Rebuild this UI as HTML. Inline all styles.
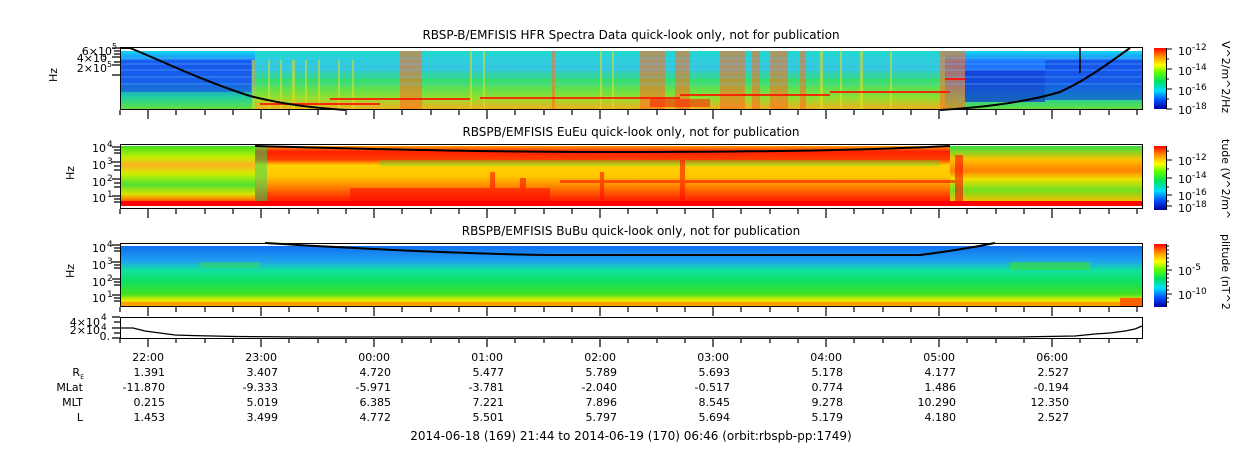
<!DOCTYPE html>
<html><head><meta charset="utf-8"><style>
body{margin:0;background:#fff;width:1250px;height:449px;overflow:hidden;font-family:"DejaVu Sans","Liberation Sans",sans-serif;}
svg text{font-family:"DejaVu Sans","Liberation Sans",sans-serif;fill:#000;}
</style></head><body>
<svg width="1250" height="449" viewBox="0 0 1250 449" xmlns="http://www.w3.org/2000/svg">
<defs>
<linearGradient id="cb" x1="0" y1="1" x2="0" y2="0">
<stop offset="0" stop-color="#0000a0"/><stop offset="0.15" stop-color="#0050ff"/><stop offset="0.3" stop-color="#00e0ff"/><stop offset="0.45" stop-color="#00e060"/><stop offset="0.6" stop-color="#60ff00"/><stop offset="0.72" stop-color="#ffff00"/><stop offset="0.86" stop-color="#ff9000"/><stop offset="1" stop-color="#ff0000"/></linearGradient>
<linearGradient id="p1v" x1="0" y1="0" x2="0" y2="1">
<stop offset="0" stop-color="#10d8f0"/><stop offset="0.2" stop-color="#2070ff"/><stop offset="0.55" stop-color="#2080f0"/><stop offset="0.8" stop-color="#20d0a0"/><stop offset="1" stop-color="#60e040"/></linearGradient>
<linearGradient id="p1m" x1="0" y1="0" x2="0" y2="1">
<stop offset="0" stop-color="#20d8d0"/><stop offset="0.3" stop-color="#30c8e0"/><stop offset="0.5" stop-color="#30e070"/><stop offset="0.8" stop-color="#90e030"/><stop offset="1" stop-color="#f0b020"/></linearGradient>
<linearGradient id="p2v" x1="0" y1="0" x2="0" y2="1">
<stop offset="0" stop-color="#ffa000"/><stop offset="0.1" stop-color="#ff2000"/><stop offset="0.25" stop-color="#ff4000"/><stop offset="0.35" stop-color="#ffd000"/><stop offset="0.55" stop-color="#ffc800"/><stop offset="0.75" stop-color="#ff8000"/><stop offset="0.9" stop-color="#ff4000"/><stop offset="1" stop-color="#ff2000"/></linearGradient>
<linearGradient id="p2l" x1="0" y1="0" x2="0" y2="1">
<stop offset="0" stop-color="#40e020"/><stop offset="0.2" stop-color="#c0f000"/><stop offset="0.35" stop-color="#ffb020"/><stop offset="0.5" stop-color="#d0f000"/><stop offset="0.7" stop-color="#50e030"/><stop offset="0.88" stop-color="#e0e000"/><stop offset="1" stop-color="#ff6000"/></linearGradient>
<linearGradient id="p2r" x1="0" y1="0" x2="0" y2="1">
<stop offset="0" stop-color="#30e040"/><stop offset="0.25" stop-color="#ffc000"/><stop offset="0.45" stop-color="#ff8000"/><stop offset="0.6" stop-color="#f0e000"/><stop offset="0.8" stop-color="#70e020"/><stop offset="1" stop-color="#f0c000"/></linearGradient>
<linearGradient id="p3v" x1="0" y1="0" x2="0" y2="1">
<stop offset="0" stop-color="#1070f0"/><stop offset="0.25" stop-color="#20a0f0"/><stop offset="0.4" stop-color="#10e0a0"/><stop offset="0.6" stop-color="#10e060"/><stop offset="0.8" stop-color="#40e020"/><stop offset="0.9" stop-color="#e0f000"/><stop offset="1" stop-color="#ffb000"/></linearGradient>
</defs>

<text x="631" y="39" font-size="12" text-anchor="middle">RBSP-B/EMFISIS  HFR Spectra Data quick-look only, not for publication</text>
<text x="631" y="136" font-size="12" text-anchor="middle">RBSPB/EMFISIS  EuEu quick-look only, not for publication</text>
<text x="631" y="235" font-size="12" text-anchor="middle">RBSPB/EMFISIS  BuBu quick-look only, not for publication</text>

<!-- PANEL 1 -->
<rect x="121" y="51" width="1021" height="58" fill="url(#p1v)"/>
<rect x="255" y="51" width="690" height="58" fill="url(#p1m)"/>
<g fill="#ff7020" opacity="0.6">
<rect x="400" y="51" width="22" height="58"/><rect x="552" y="51" width="3" height="58"/><rect x="640" y="51" width="25" height="58"/><rect x="675" y="51" width="15" height="58"/><rect x="720" y="51" width="25" height="58"/><rect x="752" y="51" width="8" height="58"/><rect x="770" y="51" width="18" height="58"/><rect x="800" y="51" width="6" height="58"/><rect x="940" y="51" width="25" height="58"/></g>
<g fill="#e0e020" opacity="0.6">
<rect x="252" y="60" width="3" height="49"/><rect x="268" y="60" width="2" height="49"/><rect x="280" y="60" width="2" height="49"/><rect x="292" y="60" width="3" height="49"/><rect x="305" y="60" width="2" height="49"/><rect x="318" y="60" width="2" height="49"/><rect x="338" y="60" width="2" height="49"/><rect x="352" y="60" width="2" height="49"/><rect x="470" y="51" width="2" height="58"/><rect x="483" y="51" width="2" height="58"/><rect x="600" y="51" width="2" height="58"/><rect x="612" y="51" width="2" height="58"/><rect x="820" y="51" width="3" height="58"/><rect x="840" y="51" width="2" height="58"/><rect x="860" y="51" width="3" height="58"/><rect x="890" y="51" width="2" height="58"/></g>
<g fill="#ff1000" opacity="0.85">
<rect x="330" y="98" width="140" height="2"/><rect x="480" y="97" width="200" height="2"/><rect x="680" y="94" width="150" height="2"/><rect x="830" y="91" width="120" height="2"/><rect x="945" y="78" width="20" height="2"/><rect x="260" y="103" width="120" height="2"/><rect x="650" y="99" width="60" height="8" opacity="0.6"/></g>
<rect x="965" y="70" width="80" height="32" fill="#1030d0" opacity="0.7"/>
<rect x="1045" y="60" width="97" height="40" fill="#1040e0" opacity="0.6"/>
<rect x="121" y="60" width="130" height="32" fill="#1040e0" opacity="0.5"/>
<g stroke="#60c0ff" stroke-width="1" opacity="0.5">
<line x1="121" y1="58" x2="1142" y2="58"/><line x1="121" y1="64" x2="1142" y2="64"/><line x1="121" y1="70" x2="1142" y2="70"/><line x1="121" y1="77" x2="1142" y2="77"/><line x1="121" y1="84" x2="1142" y2="84"/></g>
<path d="M120,48 L130,48 C160,60 200,80 250,96 C290,106 320,108 345,110 M940,110 C990,107 1030,101 1060,92 C1090,78 1110,62 1130,48" fill="none" stroke="#000" stroke-width="2"/>
<line x1="1080" y1="47" x2="1080" y2="73" stroke="#000" stroke-width="1.5"/>
<rect x="120.5" y="47.5" width="1022" height="62" fill="none" stroke="#000"/>

<!-- PANEL 2 -->
<rect x="121" y="146" width="1021" height="55" fill="url(#p2v)"/>
<rect x="121" y="146" width="134" height="55" fill="url(#p2l)"/>
<rect x="255" y="146" width="12" height="55" fill="#20e060" opacity="0.5"/>
<rect x="950" y="146" width="192" height="55" fill="url(#p2r)"/>
<rect x="380" y="160" width="560" height="6" fill="#40e030" opacity="0.35"/>
<g fill="#ff1000" opacity="0.6"><rect x="350" y="188" width="200" height="13"/><rect x="490" y="172" width="5" height="29"/><rect x="520" y="178" width="6" height="23"/><rect x="600" y="172" width="4" height="29"/><rect x="680" y="160" width="5" height="41"/><rect x="955" y="155" width="8" height="46"/><rect x="560" y="180" width="400" height="3"/></g>
<rect x="121" y="201" width="1021" height="5" fill="#ff0000"/>
<path d="M255,146 C400,150 500,152 620,152 C760,152 870,150 950,146" fill="none" stroke="#000" stroke-width="2"/>
<rect x="120.5" y="144.5" width="1022" height="64" fill="none" stroke="#000"/>

<!-- PANEL 3 -->
<rect x="121" y="246" width="1021" height="60" fill="url(#p3v)"/>
<rect x="121" y="302" width="1021" height="4" fill="#ffa000"/>
<rect x="1120" y="298" width="22" height="8" fill="#ff6000"/>
<rect x="1010" y="262" width="80" height="8" fill="#40e030" opacity="0.6"/>
<rect x="200" y="262" width="60" height="6" fill="#40e030" opacity="0.4"/>
<path d="M265,243 C380,250 470,254 550,255 L920,255 C960,250 980,246 995,243" fill="none" stroke="#000" stroke-width="2"/>
<rect x="120.5" y="243.5" width="1022" height="63" fill="none" stroke="#000"/>

<!-- PANEL 4 -->
<path d="M121,328 L133,328 L145,331 L160,333 L175,335 L190,335.5 L235,336.5 L300,337 L1015,337 L1075,336 L1095,334 L1110,333 L1125,331 L1135,329 L1142,326" fill="none" stroke="#000" stroke-width="1.3"/>
<rect x="120.5" y="317.5" width="1022" height="21" fill="none" stroke="#000"/>

<g stroke="#000" stroke-width="1.2">
<path d="M120,110v5 M148,110v9 M176,110v5 M205,110v5 M233,110v5 M261,110v9 M289,110v5 M318,110v5 M346,110v5 M374,110v9 M402,110v5 M431,110v5 M459,110v5 M487,110v9 M515,110v5 M544,110v5 M572,110v5 M600,110v9 M628,110v5 M657,110v5 M685,110v5 M713,110v9 M741,110v5 M770,110v5 M798,110v5 M826,110v9 M854,110v5 M883,110v5 M911,110v5 M939,110v9 M967,110v5 M996,110v5 M1024,110v5 M1052,110v9 M1080,110v5 M1109,110v5 M1137,110v5"/>
<path transform="translate(0,99)" d="M120,110v5 M148,110v9 M176,110v5 M205,110v5 M233,110v5 M261,110v9 M289,110v5 M318,110v5 M346,110v5 M374,110v9 M402,110v5 M431,110v5 M459,110v5 M487,110v9 M515,110v5 M544,110v5 M572,110v5 M600,110v9 M628,110v5 M657,110v5 M685,110v5 M713,110v9 M741,110v5 M770,110v5 M798,110v5 M826,110v9 M854,110v5 M883,110v5 M911,110v5 M939,110v9 M967,110v5 M996,110v5 M1024,110v5 M1052,110v9 M1080,110v5 M1109,110v5 M1137,110v5"/>
<path transform="translate(0,197)" d="M120,110v5 M148,110v9 M176,110v5 M205,110v5 M233,110v5 M261,110v9 M289,110v5 M318,110v5 M346,110v5 M374,110v9 M402,110v5 M431,110v5 M459,110v5 M487,110v9 M515,110v5 M544,110v5 M572,110v5 M600,110v9 M628,110v5 M657,110v5 M685,110v5 M713,110v9 M741,110v5 M770,110v5 M798,110v5 M826,110v9 M854,110v5 M883,110v5 M911,110v5 M939,110v9 M967,110v5 M996,110v5 M1024,110v5 M1052,110v9 M1080,110v5 M1109,110v5 M1137,110v5"/>
<path transform="translate(0,228)" d="M120,110v5 M148,110v9 M176,110v5 M205,110v5 M233,110v5 M261,110v9 M289,110v5 M318,110v5 M346,110v5 M374,110v9 M402,110v5 M431,110v5 M459,110v5 M487,110v9 M515,110v5 M544,110v5 M572,110v5 M600,110v9 M628,110v5 M657,110v5 M685,110v5 M713,110v9 M741,110v5 M770,110v5 M798,110v5 M826,110v9 M854,110v5 M883,110v5 M911,110v5 M939,110v9 M967,110v5 M996,110v5 M1024,110v5 M1052,110v9 M1080,110v5 M1109,110v5 M1137,110v5"/>
<path d="M112,48h8 M114,51h6 M114,54h6 M112,57h8 M114,62h6 M112,75h8 M112,65h8"/>
<path d="M112,147h8 M114,150h6 M114,153h6 M112,162h8 M114,166h6 M114,170h6 M112,179h8 M114,183h6 M114,187h6 M112,196h8 M114,199h6 M114,202h6"/>
<path d="M112,245h8 M114,248h6 M114,251h6 M112,262h8 M114,265h6 M114,268h6 M112,279h8 M114,282h6 M114,285h6 M112,295h8 M114,298h6 M114,301h6"/>
<path d="M112,317h8 M114,322h6 M112,328h8 M114,333h6 M112,338h8"/>
</g>

<g font-size="11">
<text x="112" y="55" text-anchor="end">6×10</text><text x="112" y="49" font-size="8">5</text>
<text x="107" y="62" text-anchor="end">4×10</text><text x="102" y="60" font-size="8">5</text>
<text x="107" y="72" text-anchor="end">2×10</text><text x="107" y="67" font-size="8">5</text>
<text x="106" y="152" text-anchor="end">10</text><text x="107" y="147" font-size="9">4</text>
<text x="106" y="169" text-anchor="end">10</text><text x="107" y="164" font-size="9">3</text>
<text x="106" y="186" text-anchor="end">10</text><text x="107" y="181" font-size="9">2</text>
<text x="106" y="202" text-anchor="end">10</text><text x="107" y="197" font-size="9">1</text>
<text x="106" y="252" text-anchor="end">10</text><text x="107" y="247" font-size="9">4</text>
<text x="106" y="269" text-anchor="end">10</text><text x="107" y="264" font-size="9">3</text>
<text x="106" y="286" text-anchor="end">10</text><text x="107" y="281" font-size="9">2</text>
<text x="106" y="302" text-anchor="end">10</text><text x="107" y="297" font-size="9">1</text>
<text x="100" y="326" text-anchor="end">4×10</text><text x="101" y="320" font-size="9">4</text>
<text x="100" y="334" text-anchor="end">2×10</text><text x="101" y="330" font-size="9">4</text>
<text x="110" y="340" text-anchor="end">0.</text>
<text transform="translate(57,82) rotate(-90)">Hz</text>
<text transform="translate(74,180) rotate(-90)">Hz</text>
<text transform="translate(74,278) rotate(-90)">Hz</text>
</g>

<rect x="1154" y="48" width="12" height="61" fill="url(#cb)"/>
<rect x="1154" y="146" width="12" height="64" fill="url(#cb)"/>
<rect x="1154" y="244" width="12" height="63" fill="url(#cb)"/>
<g stroke="#000" stroke-width="1">
<path d="M1166.5,48v61 M1166,49h6 M1166,59h3 M1166,69h6 M1166,79h3 M1166,89h6 M1166,99h3 M1166,109h6"/>
<path d="M1166.5,146v64 M1166,151h3 M1166,160h6 M1166,169h3 M1166,178h6 M1166,187h3 M1166,195h6 M1166,201h3 M1166,206h6"/>
<path d="M1166.5,244v63 M1166,246h3 M1166,250h3 M1166,254h3 M1166,258h3 M1166,262h3 M1166,266h3 M1166,270h6 M1166,274h3 M1166,278h3 M1166,282h3 M1166,286h3 M1166,290h3 M1166,294h6 M1166,298h3 M1166,302h3"/>
</g>
<g font-size="11">
<text x="1178" y="55">10</text><text x="1192" y="50" font-size="9">-12</text>
<text x="1178" y="75">10</text><text x="1192" y="70" font-size="9">-14</text>
<text x="1178" y="95">10</text><text x="1192" y="90" font-size="9">-16</text>
<text x="1178" y="114">10</text><text x="1192" y="109" font-size="9">-18</text>
<text x="1178" y="165">10</text><text x="1192" y="160" font-size="9">-12</text>
<text x="1178" y="183">10</text><text x="1192" y="178" font-size="9">-14</text>
<text x="1178" y="200">10</text><text x="1192" y="195" font-size="9">-16</text>
<text x="1178" y="212">10</text><text x="1192" y="207" font-size="9">-18</text>
<text x="1178" y="275">10</text><text x="1192" y="270" font-size="9">-5</text>
<text x="1178" y="299">10</text><text x="1192" y="294" font-size="9">-10</text>
<text transform="translate(1222,41) rotate(90)">V^2/m^2/Hz</text>
<text transform="translate(1222,139) rotate(90)">tude (V^2/m^</text>
<text transform="translate(1222,234) rotate(90)">plitude (nT^2</text>
</g>

<g font-size="11" text-anchor="end">
<text x="164" y="361">22:00</text><text x="277" y="361">23:00</text><text x="390" y="361">00:00</text><text x="503" y="361">01:00</text><text x="616" y="361">02:00</text><text x="729" y="361">03:00</text><text x="842" y="361">04:00</text><text x="955" y="361">05:00</text><text x="1068" y="361">06:00</text>
<text x="80" y="376">R</text><text x="84" y="379" font-size="6">E</text>
<text x="165" y="376">1.391</text><text x="278" y="376">3.407</text><text x="391" y="376">4.720</text><text x="504" y="376">5.477</text><text x="617" y="376">5.789</text><text x="730" y="376">5.693</text><text x="843" y="376">5.178</text><text x="956" y="376">4.177</text><text x="1069" y="376">2.527</text>
<text x="83" y="391">MLat</text>
<text x="165" y="391">-11.870</text><text x="278" y="391">-9.333</text><text x="391" y="391">-5.971</text><text x="504" y="391">-3.781</text><text x="617" y="391">-2.040</text><text x="730" y="391">-0.517</text><text x="843" y="391">0.774</text><text x="956" y="391">1.486</text><text x="1069" y="391">-0.194</text>
<text x="83" y="406">MLT</text>
<text x="165" y="406">0.215</text><text x="278" y="406">5.019</text><text x="391" y="406">6.385</text><text x="504" y="406">7.221</text><text x="617" y="406">7.896</text><text x="730" y="406">8.545</text><text x="843" y="406">9.278</text><text x="956" y="406">10.290</text><text x="1069" y="406">12.350</text>
<text x="83" y="421">L</text>
<text x="165" y="421">1.453</text><text x="278" y="421">3.499</text><text x="391" y="421">4.772</text><text x="504" y="421">5.501</text><text x="617" y="421">5.797</text><text x="730" y="421">5.694</text><text x="843" y="421">5.179</text><text x="956" y="421">4.180</text><text x="1069" y="421">2.527</text>
</g>
<text x="631" y="440" font-size="12" text-anchor="middle">2014-06-18 (169) 21:44 to 2014-06-19 (170) 06:46 (orbit:rbspb-pp:1749)</text>
</svg>
</body></html>
